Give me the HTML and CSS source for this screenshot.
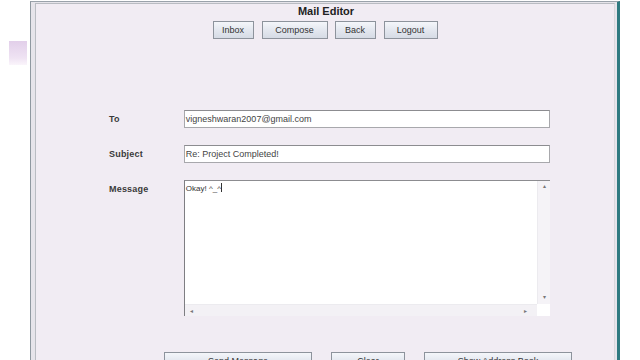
FILE: index.html
```html
<!DOCTYPE html>
<html>
<head>
<meta charset="utf-8">
<link rel="stylesheet" href="styles.css">
</head>
<body>
<div class="desktop">
  <div class="deco"></div>
  <div class="window">
    <div class="content">
      <div class="title">Mail Editor</div>
      <div class="nav">
        <button class="btn b-inbox">Inbox</button>
        <button class="btn b-compose">Compose</button>
        <button class="btn b-back">Back</button>
        <button class="btn b-logout">Logout</button>
      </div>
      <div class="form">
        <div class="row r-to">
          <span class="label">To</span>
          <div class="field">vigneshwaran2007@gmail.com</div>
        </div>
        <div class="row r-subject">
          <span class="label">Subject</span>
          <div class="field">Re: Project Completed!</div>
        </div>
        <div class="row r-message">
          <span class="label">Message</span>
          <div class="area">
            <div class="area-main">
              <div class="area-text">Okay! ^_^<span class="caret"></span></div>
              <div class="vscroll"><span class="arr">&#9652;</span><span class="arr">&#9662;</span></div>
            </div>
            <div class="hscroll"><span class="arr">&#9666;</span><span class="arr">&#9656;</span></div>
          </div>
        </div>
      </div>
      <div class="actions">
        <button class="btn a-send">Send Message</button>
        <button class="btn a-clear">Clear</button>
        <button class="btn a-book">Show Address Book</button>
      </div>
    </div>
  </div>
</div>
</body>
</html>
```
FILE: styles.css
```css
* { box-sizing: border-box; }
html, body { margin: 0; padding: 0; }
body {
  width: 640px;
  height: 360px;
  overflow: hidden;
  background: #ffffff;
  font-family: "Liberation Sans", Arial, sans-serif;
  color: #222;
}
.desktop {
  position: relative;
  width: 640px;
  height: 360px;
  display: flex;
  padding-left: 30px;
  padding-right: 20px;
}
.deco {
  position: absolute;
  left: 9px;
  top: 41px;
  width: 18px;
  height: 24px;
  background: linear-gradient(180deg, #e2cfea 0%, #efe3f3 70%, #faf5fb 100%);
}
.window {
  flex: 1;
  height: 372px;
  margin-top: 1px;
  border-left: 1px solid #8f98a0;
  border-top: 1px solid #9aa2aa;
  border-right: 3px solid #2f7a80;
  background: #e6e4ea;
  padding: 1px 2px 0 4px;
  display: flex;
}
.content {
  flex: 1;
  background: #f1ecf3;
  border-left: 1px solid #b9bcc2;
  border-top: 1px solid #b9bcc2;
  border-right: 1px solid #d8d8dc;
  display: flex;
  flex-direction: column;
  align-items: stretch;
}
.title {
  text-align: center;
  font-weight: bold;
  font-size: 11px;
  margin-top: 1px;
  margin-left: 2px;
  height: 13px;
  line-height: 13px;
  color: #222;
}
.nav {
  display: flex;
  justify-content: center;
  gap: 8px;
  margin-top: 3px;
  margin-left: 0;
}
.btn {
  font-family: "Liberation Sans", Arial, sans-serif;
  font-size: 9px;
  color: #333;
  background: linear-gradient(180deg, #f4f6fa 0%, #e2e6ee 55%, #d6dbe5 100%);
  border: 1px solid #8d939c;
  height: 18px;
  padding: 0;
  margin: 0;
}
.b-inbox { width: 41px; }
.b-compose { width: 66px; }
.b-back { width: 41px; margin-left: -1px; }
.b-logout { width: 54px; }
.form {
  display: flex;
  flex-direction: column;
  margin-top: 71px;
  margin-left: 73px;
  width: 441px;
}
.row {
  display: flex;
  align-items: flex-start;
}
.label {
  width: 75px;
  font-size: 9px;
  font-weight: bold;
  color: #3a3a3a;
  letter-spacing: 0.2px;
  padding-top: 4px;
}
.r-subject { margin-top: 17px; }
.r-message { margin-top: 17px; }
.field {
  width: 367px;
  height: 18px;
  background: #ffffff;
  border: 1px solid #a8a8ac;
  border-top-color: #8c8c90;
  font-size: 9px;
  color: #444;
  line-height: 16px;
  padding-left: 1px;
}
.area {
  width: 367px;
  height: 136px;
  background: #ffffff;
  border-left: 1px solid #7e7e82;
  border-top: 1px solid #8c8c90;
  display: flex;
  flex-direction: column;
}
.area-main {
  flex: 1;
  display: flex;
}
.area-text {
  flex: 1;
  font-size: 8px;
  color: #333;
  padding: 2px 0 0 1px;
  line-height: 10px;
}
.caret {
  display: inline-block;
  width: 1px;
  height: 9px;
  background: #333;
  vertical-align: -1px;
}
.vscroll {
  width: 13px;
  background: #f5f3f7;
  border-left: 1px solid #ecebef;
  display: flex;
  flex-direction: column;
  justify-content: space-between;
  align-items: center;
  padding: 2px 0 4px;
}
.hscroll {
  height: 12px;
  background: #f3f1f5;
  border-top: 1px solid #ecebef;
  margin-right: 13px;
  display: flex;
  justify-content: space-between;
  align-items: center;
  padding: 0 10px 0 5px;
}
.arr {
  font-size: 6px;
  line-height: 6px;
  color: #777;
}
.actions {
  display: flex;
  gap: 19px;
  margin-top: 36px;
  margin-left: 128px;
}
.a-send { width: 148px; }
.a-clear { width: 74px; }
.a-book { width: 148px; }
```
